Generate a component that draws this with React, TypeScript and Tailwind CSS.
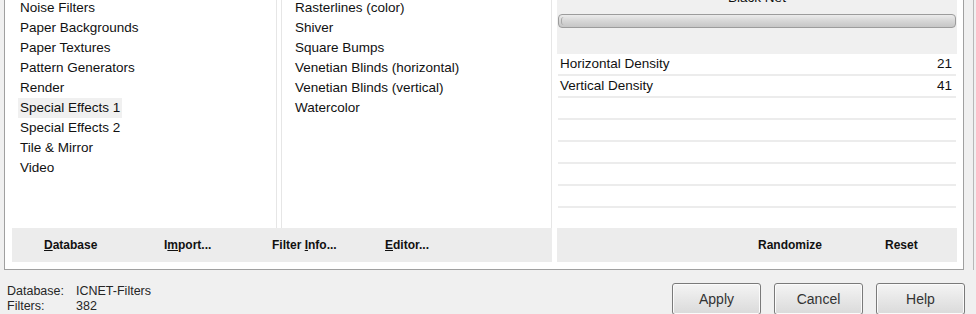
import React from "react";

const categories = [
  "Noise Filters",
  "Paper Backgrounds",
  "Paper Textures",
  "Pattern Generators",
  "Render",
  "Special Effects 1",
  "Special Effects 2",
  "Tile & Mirror",
  "Video",
];

const filters = [
  "Rasterlines (color)",
  "Shiver",
  "Square Bumps",
  "Venetian Blinds (horizontal)",
  "Venetian Blinds (vertical)",
  "Watercolor",
];

const params = [
  { name: "Horizontal Density", value: "21" },
  { name: "Vertical Density", value: "41" },
  { name: "", value: "" },
  { name: "", value: "" },
  { name: "", value: "" },
  { name: "", value: "" },
  { name: "", value: "" },
];

const DialogButton = ({ label }: { label: string }) => (
  <button className="w-[89px] h-[32px] rounded-[3px] border border-[#7a7a7a] bg-gradient-to-b from-[#f4f4f4] to-[#dadada] text-[14px] text-[#333] shadow-[inset_0_0_0_1px_#fbfbfb]">
    {label}
  </button>
);

export default function App() {
  return (
    <div className="w-[976px] h-[314px] overflow-hidden bg-[#f0f0f0] text-[#111] font-['Liberation_Sans',Arial,sans-serif]">
      {/* Filter frame */}
      <div className="flex">
        <div className="ml-[4px] w-[960px] h-[270px] bg-white border-x border-b border-[#a0a0a0] pl-[7px] pr-[6px] flex flex-col">
          <div className="flex h-[228px]">
            {/* Category list */}
            <div className="w-[265px] border-r border-[#e6e6e6] pl-[6px] overflow-hidden">
              <ul className="-mt-[2px] text-[13.5px]">
                {categories.map((c) => (
                  <li key={c} className="h-[20px] flex items-center">
                    <span
                      className={
                        "px-[2px] leading-[20px] " +
                        (c === "Special Effects 1" ? "bg-[#f0f0f0]" : "")
                      }
                    >
                      {c}
                    </span>
                  </li>
                ))}
              </ul>
            </div>

            {/* Filter list */}
            <div className="ml-[4px] w-[271px] border-x border-[#e6e6e6] pl-[11px] overflow-hidden">
              <ul className="-mt-[2px] text-[13.5px]">
                {filters.map((f) => (
                  <li key={f} className="h-[20px] flex items-center">
                    <span className="px-[2px] leading-[20px]">{f}</span>
                  </li>
                ))}
              </ul>
            </div>

            {/* Parameters */}
            <div className="ml-[5px] w-[400px] flex flex-col overflow-hidden">
              <div className="h-[54px] bg-[#f0f0f0] px-[1px] flex flex-col">
                <div className="-mt-[10px] h-[16px] leading-[16px] text-center text-[13.5px]">
                  Black Net
                </div>
                <div className="mt-[8px] h-[14px] rounded-[4px] border border-[#9c9c9c] bg-gradient-to-b from-[#ececec] via-[#d6d6d6] to-[#c6c6c6] flex items-center pl-[2px]">
                  <div className="w-[3px] h-[8px] rounded-l-full border-l border-[#a8a8a8]" />
                </div>
              </div>
              <div className="px-[1px]">
                {params.map((p, i) => (
                  <div
                    key={i}
                    className="h-[22px] border-b-2 border-[#ececec] flex items-center justify-between pl-[2px] pr-[4px] text-[13.5px]"
                  >
                    <span>{p.name}</span>
                    <span>{p.value}</span>
                  </div>
                ))}
              </div>
            </div>
          </div>

          {/* Toolbars */}
          <div className="flex h-[34px] text-[12px] font-bold text-[#111]">
            <div className="w-[540px] bg-[#ececec] flex items-center pl-[32px]">
              <span className="w-[120px]">
                <u>D</u>atabase
              </span>
              <span className="w-[108px]">
                I<u>m</u>port...
              </span>
              <span className="w-[113px]">
                Filter <u>I</u>nfo...
              </span>
              <span>
                <u>E</u>ditor...
              </span>
            </div>
            <div className="ml-[5px] w-[400px] bg-[#ececec] flex items-center pl-[201px]">
              <span className="w-[127px]">Randomize</span>
              <span>Reset</span>
            </div>
          </div>
        </div>
        <div className="w-[9px]" />
        <div className="w-px h-[270px] bg-[#b8b8b8]" />
      </div>

      {/* Status + dialog buttons */}
      <div className="flex items-start justify-between pr-[11px]">
        <div className="pt-[14px] pl-[7px] text-[12.5px] leading-[15px] text-[#262626]">
          <div className="flex">
            <span className="w-[69px]">Database:</span>
            <span>ICNET-Filters</span>
          </div>
          <div className="flex">
            <span className="w-[69px]">Filters:</span>
            <span>382</span>
          </div>
        </div>
        <div className="pt-[13px] flex gap-[13px]">
          <DialogButton label="Apply" />
          <DialogButton label="Cancel" />
          <DialogButton label="Help" />
        </div>
      </div>
    </div>
  );
}
